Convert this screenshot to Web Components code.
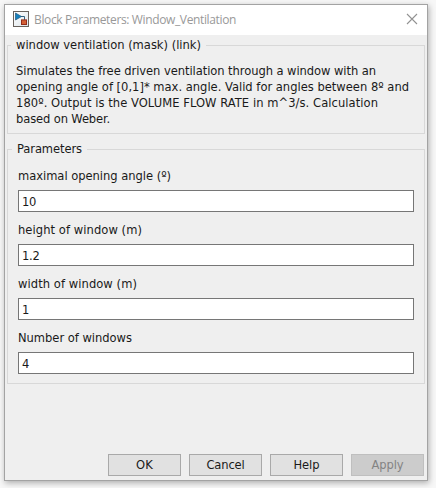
<!DOCTYPE html>
<html lang="en">
<head>
<meta charset="utf-8">
<title>Block Parameters: Window_Ventilation</title>
<style>
html,body{margin:0;height:100%;overflow:hidden}
body{background:#f7f7f7;font-family:"DejaVu Sans Condensed","DejaVu Sans",Tahoma,sans-serif;font-stretch:condensed;font-size:12.8px;line-height:16px;color:#1a1a1a}
</style>
</head>
<body>
<dialog-window>
  <title-bar slot="title"><text-run fit="202">Block Parameters: Window_Ventilation</text-run></title-bar>
  <group-box style="--h:89px;--legend-x:8px">
    <text-run slot="legend" fit="185">window ventilation (mask) (link)</text-run>
    <mask-description>
      <text-run fit="360">Simulates the free driven ventilation through a window with an</text-run>
      <text-run fit="393">opening angle of [0,1]* max. angle. Valid for angles between 8º and</text-run>
      <text-run fit="362">180º. Output is the VOLUME FLOW RATE in m^3/s. Calculation</text-run>
      <text-run fit="94">based on Weber.</text-run>
    </mask-description>
  </group-box>
  <group-box style="--h:235px;--legend-x:9px">
    <text-run slot="legend" fit="65">Parameters</text-run>
    <param-field value="10"><text-run fit="153">maximal opening angle (º)</text-run></param-field>
    <param-field value="1.2"><text-run fit="124">height of window (m)</text-run></param-field>
    <param-field value="1"><text-run fit="119">width of window (m)</text-run></param-field>
    <param-field value="4"><text-run fit="114">Number of windows</text-run></param-field>
  </group-box>
  <push-button slot="actions"><text-run fit="17">OK</text-run></push-button>
  <push-button slot="actions"><text-run fit="38">Cancel</text-run></push-button>
  <push-button slot="actions"><text-run fit="26">Help</text-run></push-button>
  <push-button slot="actions" disabled><text-run fit="32">Apply</text-run></push-button>
</dialog-window>
<script>
function define(name, html, init) {
  const template = document.createElement('template');
  template.innerHTML = html;
  customElements.define(name, class extends HTMLElement {
    constructor() {
      super();
      this.attachShadow({mode: 'open'}).append(template.content.cloneNode(true));
    }
    connectedCallback() { if (init) init(this); }
  });
}

define('dialog-window', `
<style>
:host{display:flex;flex-direction:column;box-sizing:border-box;width:424px;height:477px;margin:4px 0 0 4px;background:#efefef;border:1px solid #a3a3a3;box-shadow:1px 2px 6px rgba(0,0,0,.3)}
main{flex:1;padding:10px 2px 0;display:flex;flex-direction:column;gap:15px}
footer{display:flex;justify-content:flex-end;gap:8px;padding:0 3px 4px}
</style>
<slot name="title"></slot><main><slot></slot></main><footer><slot name="actions"></slot></footer>`);

define('title-bar', `
<style>
:host{display:flex;align-items:center;box-sizing:border-box;height:30px;background:#fff;padding:0 8px;color:#999;font-family:"Open Sans","Noto Sans",sans-serif;font-stretch:normal;font-size:12px}
.caption{flex:1;margin-left:5px}
.app,.close{display:block;position:relative;top:-1px}
.close{margin-right:1px}
</style>
<svg class="app" width="16" height="16" viewBox="0 0 16 16">
<defs><linearGradient id="g" x2="1" y2="1"><stop stop-color="#fff"/><stop offset="1" stop-color="#dde5ea"/></linearGradient></defs>
<rect x=".5" y=".5" width="15" height="15" fill="url(#g)" stroke="#68625c"/>
<path d="M8 5.5h3.5V9" fill="none" stroke="#35617f"/>
<path d="M2.5 2v7L8.5 5.5z" fill="#1681bd" stroke="#21577d" stroke-width=".7"/>
<rect x="8.5" y="8.9" width="5" height="4.6" fill="#d45f36" stroke="#922d19"/>
</svg>
<span class="caption"><slot></slot></span>
<svg class="close" width="12" height="12" viewBox="0 0 12 12"><path d="M1 1l10 10M11 1L1 11" stroke="#929292" stroke-width="1.1"/></svg>`);

define('group-box', `
<style>
:host{display:block;height:var(--h);flex:none}
fieldset{box-sizing:border-box;height:100%;margin:0;min-width:0;border:1px solid #d8d8d8;padding:0;display:grid;grid-template-rows:8px auto;align-content:start}
.legend{justify-self:start;margin:-9px 0 0 calc(var(--legend-x) - 5px);height:16px;padding:0 5px;background:#efefef}
.body{grid-row:2}
</style>
<fieldset><div class="legend"><slot name="legend"></slot></div><div class="body"><slot></slot></div></fieldset>`);

define('mask-description', `<style>:host{display:flex;flex-direction:column;align-items:flex-start;padding:9px 0 0 8px}</style><slot></slot>`);

define('param-field', `
<style>
:host{display:block;padding:0 10px;height:54px}
label{display:block;height:22px;padding-top:10px;box-sizing:content-box}
.value{display:flex;align-items:center;box-sizing:border-box;height:22px;background:#fff;border:1px solid #767676;padding:1px 0 0 3px;letter-spacing:-.2px}
</style>
<label><slot></slot></label><div class="value"></div>`,
el => { el.shadowRoot.querySelector('.value').textContent = el.getAttribute('value'); });

define('push-button', `
<style>
:host{display:flex;align-items:center;justify-content:center;box-sizing:border-box;width:73px;height:22px;background:#e1e1e1;border:1px solid #a9a9a9}
:host([disabled]){background:#cccccc;border-color:#bfbfbf;color:#838383}
</style><slot></slot>`);

/* A single line of text whose tracking is adjusted to a given width. */
define('text-run', `<style>:host{display:inline-block;white-space:nowrap}</style><slot></slot>`, el => {
  const chars = [...el.textContent].length;
  const extra = (Number(el.getAttribute('fit')) - el.getBoundingClientRect().width) / chars;
  el.style.letterSpacing = extra.toFixed(3) + 'px';
});
</script>
</body>
</html>
